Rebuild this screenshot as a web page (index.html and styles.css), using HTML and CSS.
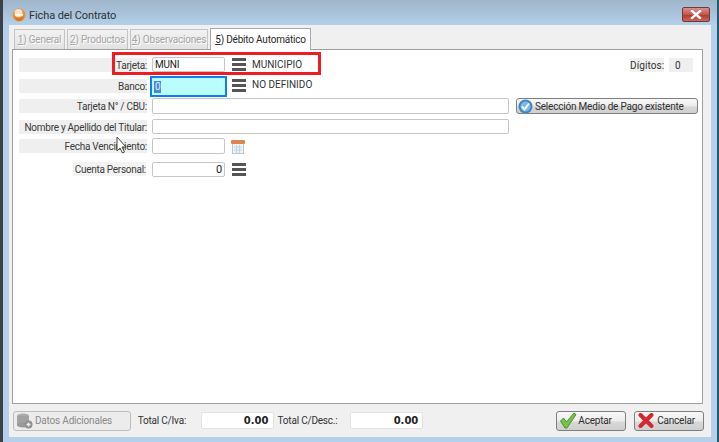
FILE: index.html
```html
<!DOCTYPE html>
<html lang="es">
<head>
<meta charset="utf-8">
<title>Ficha del Contrato</title>
<link rel="stylesheet" href="styles.css">
</head>
<body>
<div class="window">
  <header class="titlebar">
    <svg class="app-icon" width="14" height="14" viewBox="0 0 14 14"><circle cx="7" cy="7" r="6.5" fill="#e8913a"/><circle cx="6.5" cy="5" r="4" fill="#fbe3c4"/><path d="M3 8.500c2 2.500 6 2.500 9-.5-1 4-3 5-5 5s-4-2-4-4.500z" fill="#d8742a"/><rect x="3" y="6" width="8" height="1.600" fill="#fff"/></svg>
    <span class="title">Ficha del Contrato</span>
    <button class="close"><svg width="12" height="9" viewBox="0 0 12 9"><path d="M2 1l8 7M10 1L2 8" stroke="#fff" stroke-width="2.400" stroke-linecap="square"/></svg></button>
  </header>
  <main class="client">
    <nav class="tabs">
      <span class="tab t1"><u>1</u>) General</span>
      <span class="tab t2"><u>2</u>) Productos</span>
      <span class="tab t3"><u>4</u>) Observaciones</span>
      <span class="tab active"><u>5</u>) Débito Automático</span>
    </nav>
    <section class="panel">
      <div class="form">
        <div class="row">
          <label class="lbl">Tarjeta:</label>
          <div class="field short">MUNI</div>
          <svg class="menu" width="14" height="14" viewBox="0 0 14 14"><path d="M0 0h14v3H0zM0 5h14v3H0zM0 10h14v3H0z" fill="#555"/></svg>
          <span class="desc">MUNICIPIO</span>
          <span class="digits">Dígitos:</span>
          <span class="digits-val">0</span>
        </div>
        <div class="row row-focus">
          <label class="lbl">Banco:</label>
          <div class="field focus"><span class="sel">0</span></div>
          <svg class="menu" width="14" height="14" viewBox="0 0 14 14"><path d="M0 0h14v3H0zM0 5h14v3H0zM0 10h14v3H0z" fill="#555"/></svg>
          <span class="desc">NO DEFINIDO</span>
        </div>
        <div class="row">
          <label class="lbl">Tarjeta N° / CBU:</label>
          <div class="field long tall"></div>
          <button class="btn select">
            <svg width="15" height="15" viewBox="0 0 15 15"><circle cx="7.500" cy="7.500" r="7" fill="#3f86c9"/><circle cx="7.500" cy="7.500" r="5" fill="#7db6ea"/><path d="M4 7.500l2.500 3L11 4.500" fill="none" stroke="#fff" stroke-width="2"/></svg>
            Selección Medio de Pago existente
          </button>
        </div>
        <div class="row">
          <label class="lbl">Nombre y Apellido del Titular:</label>
          <div class="field long"></div>
        </div>
        <div class="row">
          <label class="lbl">Fecha Vencimiento:</label>
          <div class="field short tall"></div>
          <svg class="cal" width="14" height="14" viewBox="0 0 14 14"><rect x="1.500" y="3.500" width="11" height="10" fill="#eef3f6" stroke="#b7c7d3"/><rect x="0" y="0" width="14" height="4" rx="1" fill="#dc8550"/><path d="M3 7h8M3 10h8M5.500 5v8M8.500 5v8" stroke="#c4d3dd"/></svg>
        </div>
        <div class="row">
          <label class="lbl personal">Cuenta Personal:</label>
          <div class="field short num">0</div>
          <svg class="menu" width="14" height="14" viewBox="0 0 14 14"><path d="M0 0h14v3H0zM0 5h14v3H0zM0 10h14v3H0z" fill="#555"/></svg>
        </div>
      </div>
      <div class="highlight"></div>
      <svg class="cursor" width="11" height="18" viewBox="0 0 11 18"><path d="M1 1v14l3-3 2.500 5 2-1-2.500-5h4z" fill="#fff" stroke="#444"/></svg>
    </section>
    <footer class="footer">
      <button class="btn extra" disabled>
        <svg width="17" height="16" viewBox="0 0 17 16"><ellipse cx="7" cy="3" rx="6" ry="2.500" fill="#aaa"/><rect x="1" y="3" width="12" height="9" fill="#a2a2a2"/><ellipse cx="7" cy="12" rx="6" ry="2.500" fill="#999"/><circle cx="12.500" cy="11.500" r="4" fill="#8f8f8f"/><path d="M12.500 9.500v4M10.500 11.500h4" stroke="#eee" stroke-width="1.500"/></svg>
        Datos Adicionales
      </button>
      <span class="tot-a">Total C/Iva:</span>
      <div class="total t-iva">0.00</div>
      <span class="tot-b">Total C/Desc.:</span>
      <div class="total t-desc">0.00</div>
      <button class="btn action ok">
        <svg width="18" height="17" viewBox="0 0 18 17"><path d="M1.500 9l3-3 3 4L15 1l2 1.500L8 16h-2z" fill="#76c442" stroke="#4d8f35"/></svg>
        Aceptar
      </button>
      <button class="btn action cancel">
        <svg width="16" height="15" viewBox="0 0 16 15"><path d="M2.500 2l11 11M13.500 2l-11 11" stroke="#d8262c" stroke-width="4" stroke-linecap="round"/></svg>
        Cancelar
      </button>
    </footer>
  </main>
</div>
</body>
</html>
```

FILE: styles.css
```css
* { box-sizing: border-box; }
html, body { margin: 0; padding: 0; }
body {
  width: 719px;
  height: 442px;
  overflow: hidden;
  font-family: Roboto, "Liberation Sans", sans-serif;
  font-size: 10px;
  letter-spacing: -0.200px;
  color: #333;
}
.window {
  width: 719px;
  height: 442px;
  display: flex;
  flex-direction: column;
  padding: 0 6px 5px 6px;
  background: linear-gradient(#9fb5ca 0, #b4d0ea 26px);
  border-left: 3px solid #3c4146;
  border-right: 2px solid #24586b;
}
.titlebar {
  height: 25px;
  flex: none;
  display: flex;
  align-items: center;
  padding: 4px 1px 0 3px;
}
.app-icon { flex: none; }
.title {
  margin-left: 3px;
  margin-top: 2px;
  font-size: 11px;
  letter-spacing: -0.100px;
  color: #2c3238;
}
.close {
  margin-left: auto;
  width: 28px;
  height: 15px;
  padding: 0;
  display: flex;
  align-items: center;
  justify-content: center;
  border: 1px solid #6f3a3a;
  border-radius: 2px;
  background: linear-gradient(#d9908a, #c4564e 50%, #b43a32 55%, #c8675c);
}
.client {
  flex: 1;
  min-height: 0;
  display: flex;
  flex-direction: column;
  background: #f0f0f0;
  padding: 3px 8px 0 3px;
}
.tabs {
  height: 21px;
  flex: none;
  display: flex;
  align-items: flex-end;
  position: relative;
  z-index: 1;
  padding-left: 2px;
  gap: 2px;
}
.tab {
  height: 20px;
  display: flex;
  align-items: center;
  justify-content: center;
  white-space: pre;
  border: 1px solid #c4c4c4;
  border-bottom: 0;
  background: linear-gradient(#f2f2f2, #e2e2e2);
  color: #a4a4a4;
  text-shadow: 1px 1px 0 #fff;
}
.t1 { width: 51px; }
.t2 { width: 61px; }
.t3 { width: 78px; }
.tab.active {
  width: 101px;
  height: 22px;
  margin-bottom: -1px;
  background: #fff;
  border-color: #a9a9a9;
  color: #2a2a2a;
  text-shadow: none;
}
.panel {
  position: relative;
  height: 355px;
  flex: none;
  background: #fff;
  border: 1px solid #a0a0a0;
  padding: 7px 4px 0 6px;
}
.form {
  display: grid;
  grid-template-rows: 19px 22px 21px 19px 24px 15px;
}
.row {
  display: flex;
  align-items: flex-start;
  min-height: 0;
}
.lbl {
  width: 128px;
  height: 14px;
  margin-top: 1px;
  flex: none;
  display: flex;
  align-items: center;
  justify-content: flex-end;
  background: #efefef;
  white-space: nowrap;
  letter-spacing: -0.270px;
  color: #3a3a3a;
}
.lbl.personal {
  width: 73px;
  margin-left: 54px;
  margin-right: 1px;
  margin-top: 0;
  background: #f3f3f3;
}
.row-focus .lbl { margin-top: 3px; }
.row-focus .menu { margin-top: 3px; margin-left: 5px; }
.row-focus .desc { margin-top: 2px; }
.field {
  height: 15px;
  margin-left: 5px;
  flex: none;
  display: flex;
  align-items: center;
  border: 1px solid #c6c6c6;
  border-radius: 2px;
  background: #fff;
  padding: 0 3px 0 2px;
  color: #222;
}
.tall { height: 16px; }
.short { width: 73px; }
.long { width: 357px; }
.num { justify-content: flex-end; font-size: 11px; padding-right: 2px; }
.focus {
  width: 77px;
  height: 21px;
  margin-left: 3px;
  border: 2px solid #0f7ef0;
  border-radius: 0;
  background: #b9fdff;
}
.sel { background: #4f87d6; color: #d9ecff; padding: 0 1px; line-height: 12px; }
.menu { margin-left: 7px; flex: none; margin-top: 1px; }
.desc { margin-left: 6px; margin-top: 1px; height: 14px; line-height: 14px; letter-spacing: 0; color: #333; }
.digits {
  margin-left: auto;
  height: 14px;
  margin-top: 1px;
  width: 34px;
  display: flex;
  align-items: center;
  background: #f1f1f1;
  white-space: nowrap;
  letter-spacing: 0.100px;
}
.digits-val {
  margin-left: 5px;
  margin-right: 5px;
  margin-top: 1px;
  width: 24px;
  height: 14px;
  display: flex;
  align-items: center;
  background: #efefef;
  padding-left: 6px;
}
.cal { margin-left: 6px; margin-top: 2px; flex: none; }
.btn {
  display: flex;
  align-items: center;
  font: inherit;
  letter-spacing: inherit;
  color: #2e2e2e;
  padding: 0;
  white-space: nowrap;
  border: 1px solid #7f7f7f;
  border-radius: 3px;
  background: linear-gradient(#f8f8f8, #ececec 50%, #d8d8d8 55%, #cfcfcf);
}
.btn svg { flex: none; }
.select {
  margin-left: 7px;
  width: 182px;
  height: 16px;
  gap: 2px;
  padding-left: 1px;
}
.highlight {
  position: absolute;
  left: 99px;
  top: 2px;
  width: 209px;
  height: 23px;
  border: 3px solid #ee1c25;
}
.cursor {
  position: absolute;
  left: 103px;
  top: 86px;
}
.footer {
  flex: 1;
  display: flex;
  align-items: center;
  padding-left: 1px;
  margin-right: -1px;
}
.extra {
  width: 118px;
  height: 20px;
  padding-left: 2px;
  gap: 2px;
  border-color: #bdbdbd;
  background: #ececec;
  color: #8a8a8a;
}
.tot-a { margin-left: 7px; width: 63px; }
.total {
  height: 17px;
  flex: none;
  display: flex;
  align-items: center;
  justify-content: flex-end;
  background: #fff;
  border: 1px solid #e2e2e2;
  border-radius: 2px;
  padding-right: 4px;
  font-family: "DejaVu Sans", sans-serif;
  font-size: 10px;
  letter-spacing: 0;
  font-weight: 700;
  color: #222;
}
.t-iva { width: 73px; }
.tot-b { margin-left: 4px; width: 73px; }
.t-desc { width: 73px; }
.action {
  width: 70px;
  height: 20px;
  gap: 1px;
  padding-left: 2px;
}
.ok { margin-left: 133px; }
.cancel { margin-left: 8px; padding-left: 3px; gap: 3px; }
```
